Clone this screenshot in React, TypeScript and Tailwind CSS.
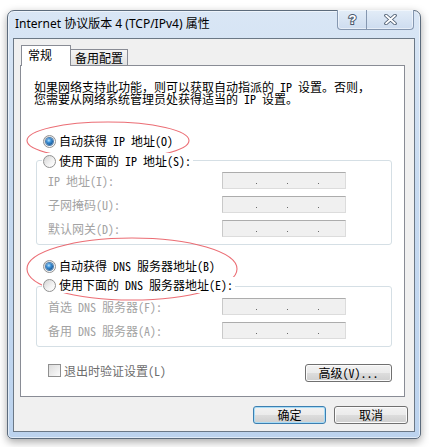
import React from "react";

const F = "font-['Noto_Sans_Mono_CJK_SC','Noto_Sans_CJK_SC',sans-serif]";

function Radio({ checked }: { checked?: boolean }) {
  return (
    <span className="w-[13px] h-[13px] shrink-0 rounded-full border border-[#929292] bg-[linear-gradient(135deg,#d2d2d2,#f4f4f4_60%,#ffffff)] flex items-center justify-center">
      {checked && (
        <span className="w-[7px] h-[7px] rounded-full bg-[radial-gradient(circle_at_40%_35%,#b7e3ff_0%,#3a8fd6_35%,#125190_80%)] shadow-[0_0_0_1px_#4f7fae]" />
      )}
    </span>
  );
}

function IpBox() {
  return (
    <div className="w-[124px] h-[17px] shrink-0 flex items-end pl-[33px] pb-[4px] gap-[30px] bg-[#f0f0f0] border border-[#dcdcdc] border-t-[#acacac] border-l-[#c9c9c9]">
      <span className="w-px h-px bg-[#6a6a6a]" />
      <span className="w-px h-px bg-[#6a6a6a]" />
      <span className="w-px h-px bg-[#6a6a6a]" />
    </div>
  );
}

function Field({ label, w }: { label: string; w: string }) {
  return (
    <div className="flex items-center h-[17px]">
      <span className={`${w} shrink-0 text-[#a3a3a3] leading-[12px]`}>{label}</span>
      <IpBox />
    </div>
  );
}

function RadioRow({ checked, label }: { checked?: boolean; label: string }) {
  return (
    <div className="flex items-center h-[16px] ml-[22px]">
      <Radio checked={checked} />
      <span className="ml-[3px] leading-[12px] whitespace-pre">{label}</span>
    </div>
  );
}

function LegendRadio({ label }: { label: string }) {
  return (
    <div className="relative z-10 self-start flex items-center h-[16px] ml-[21px] pl-px pr-[2px] bg-white">
      <Radio />
      <span className="ml-[3px] leading-[12px] whitespace-pre">{label}</span>
    </div>
  );
}

function WinButton({ children, def, w }: { children: React.ReactNode; def?: boolean; w: string }) {
  return (
    <div
      className={`${w} h-[18px] rounded-[3px] border flex items-center justify-center leading-[12px] text-black bg-[linear-gradient(#f2f2f2_0%,#ebebeb_50%,#dddddd_50%,#cfcfcf_100%)] ${
        def
          ? "border-[#3c7fb1] shadow-[inset_0_0_0_1px_#a8dcf6]"
          : "border-[#707070] shadow-[inset_0_0_0_1px_#fbfbfb]"
      }`}
    >
      {children}
    </div>
  );
}

export default function App() {
  return (
    <div className={`relative w-[429px] h-[447px] bg-white overflow-hidden pt-[10px] pl-[7px] ${F} text-[12px] text-black`}>
      {/* window */}
      <div className="w-[414px] h-[429px] flex flex-col rounded-t-[7px] rounded-b-[5px] border border-[#5c6b7c] bg-[linear-gradient(#d9e6f5_0%,#c8dbf1_40%,#bcd3ee_100%)] shadow-[inset_0_0_0_1px_rgba(255,255,255,0.55),0_3px_9px_rgba(0,0,0,0.35)]">
        {/* title bar */}
        <div className="h-[27px] shrink-0 flex items-start justify-between pl-[7px] pr-[6px]">
          <span className="mt-[5px] leading-[16px] text-[12px] font-['Noto_Sans','Noto_Sans_CJK_SC',sans-serif] text-black">
            Internet 协议版本 4 (TCP/IPv4) 属性
          </span>
          <div className="flex -mt-px h-[20px] rounded-b-[4px] border border-t-0 border-[#8597b0] bg-[linear-gradient(#e3edf8,#cddcef)] shadow-[inset_0_0_0_1px_rgba(255,255,255,0.5)]">
            <div className="w-[29px] flex items-center justify-center border-r border-[#8597b0]">
              <svg width="11" height="13" viewBox="0 0 11 13">
                <text
                  x="5.5"
                  y="11"
                  textAnchor="middle"
                  fontSize="13"
                  fontWeight="bold"
                  fontFamily="Liberation Sans, sans-serif"
                  fill="#ffffff"
                  stroke="#4a5a6e"
                  strokeWidth="2"
                  paintOrder="stroke"
                >
                  ?
                </text>
              </svg>
            </div>
            <div className="w-[46px] flex items-center justify-center">
              <svg width="13" height="11" viewBox="0 0 13 11">
                <path d="M2 1.5 L11 9.5 M11 1.5 L2 9.5" stroke="#4a5a6e" strokeWidth="3.6" strokeLinecap="round" />
                <path d="M2 1.5 L11 9.5 M11 1.5 L2 9.5" stroke="#ffffff" strokeWidth="1.8" strokeLinecap="round" />
              </svg>
            </div>
          </div>
        </div>

        {/* client area */}
        <div className="mx-[5px] h-[394px] border border-[#6b7886] bg-[#f0f0f0] pl-[6px] pt-[6px] flex flex-col">
          {/* tabs */}
          <div className="h-[20px] flex items-end ml-px">
            <div className="relative z-10 w-[50px] h-[21px] -mb-px bg-white border border-b-0 border-[#898c95] pl-[6px] pt-[3px] leading-[12px]">
              常规
            </div>
            <div className="w-[57px] h-[16px] border border-b-0 border-l-0 border-[#898c95] bg-[linear-gradient(#f5f5f5,#e2e2e2)] pl-[4px] pt-[2px] leading-[12px]">
              备用配置
            </div>
          </div>

          {/* panel */}
          <div className="w-[385px] h-[332px] border border-[#898c95] bg-white flex flex-col">
            <div className="ml-[13px] mt-[15px] leading-[12px]">
              <div className="whitespace-pre">如果网络支持此功能，则可以获取自动指派的 IP 设置。否则，</div>
              <div className="whitespace-pre">您需要从网络系统管理员处获得适当的 IP 设置。</div>
            </div>

            <div className="mt-[28px]">
              <RadioRow checked label="自动获得 IP 地址(O)" />
            </div>
            <div className="mt-[4px] flex flex-col">
              <LegendRadio label="使用下面的 IP 地址(S):" />
              <div className="-mt-[9px] ml-[15px] w-[356px] h-[85px] rounded-[3px] border border-[#d5dfe5] pl-[11px] pt-[11px] flex flex-col gap-[7px]">
                <Field label="IP 地址(I):" w="w-[174px]" />
                <Field label="子网掩码(U):" w="w-[174px]" />
                <Field label="默认网关(D):" w="w-[174px]" />
              </div>
            </div>

            <div className="mt-[13px]">
              <RadioRow checked label="自动获得 DNS 服务器地址(B)" />
            </div>
            <div className="mt-[3px] flex flex-col">
              <LegendRadio label="使用下面的 DNS 服务器地址(E):" />
              <div className="-mt-[7px] ml-[15px] w-[356px] h-[61px] rounded-[3px] border border-[#d5dfe5] pl-[11px] pt-[11px] flex flex-col gap-[7px]">
                <Field label="首选 DNS 服务器(F):" w="w-[174px]" />
                <Field label="备用 DNS 服务器(A):" w="w-[174px]" />
              </div>
            </div>

            <div className="mt-[17px] flex items-start justify-between ml-[27px] mr-[12px]">
              <div className="flex items-center h-[13px]">
                <span className="w-[13px] h-[13px] border border-[#8f8f8f] bg-[linear-gradient(135deg,#dcdcdc,#fbfbfb)]" />
                <span className="ml-[3px] leading-[12px] text-[#6d6d6d]">退出时验证设置(L)</span>
              </div>
              <WinButton w="w-[87px]">高级(V)...</WinButton>
            </div>
          </div>

          {/* footer */}
          <div className="mt-[9px] flex justify-end gap-[8px] pr-[6px]">
            <WinButton def w="w-[73px]">确定</WinButton>
            <WinButton w="w-[74px]">取消</WinButton>
          </div>
        </div>
      </div>

      {/* red annotation ellipses */}
      <svg className="absolute left-0 top-0 pointer-events-none" width="429" height="447" viewBox="0 0 429 447">
        <ellipse cx="108" cy="140.5" rx="81" ry="18.5" fill="none" stroke="#e8535c" strokeOpacity="0.85" strokeWidth="1.1" />
        <ellipse cx="132" cy="269" rx="105" ry="31" fill="none" stroke="#e8535c" strokeOpacity="0.85" strokeWidth="1.1" />
      </svg>
    </div>
  );
}
